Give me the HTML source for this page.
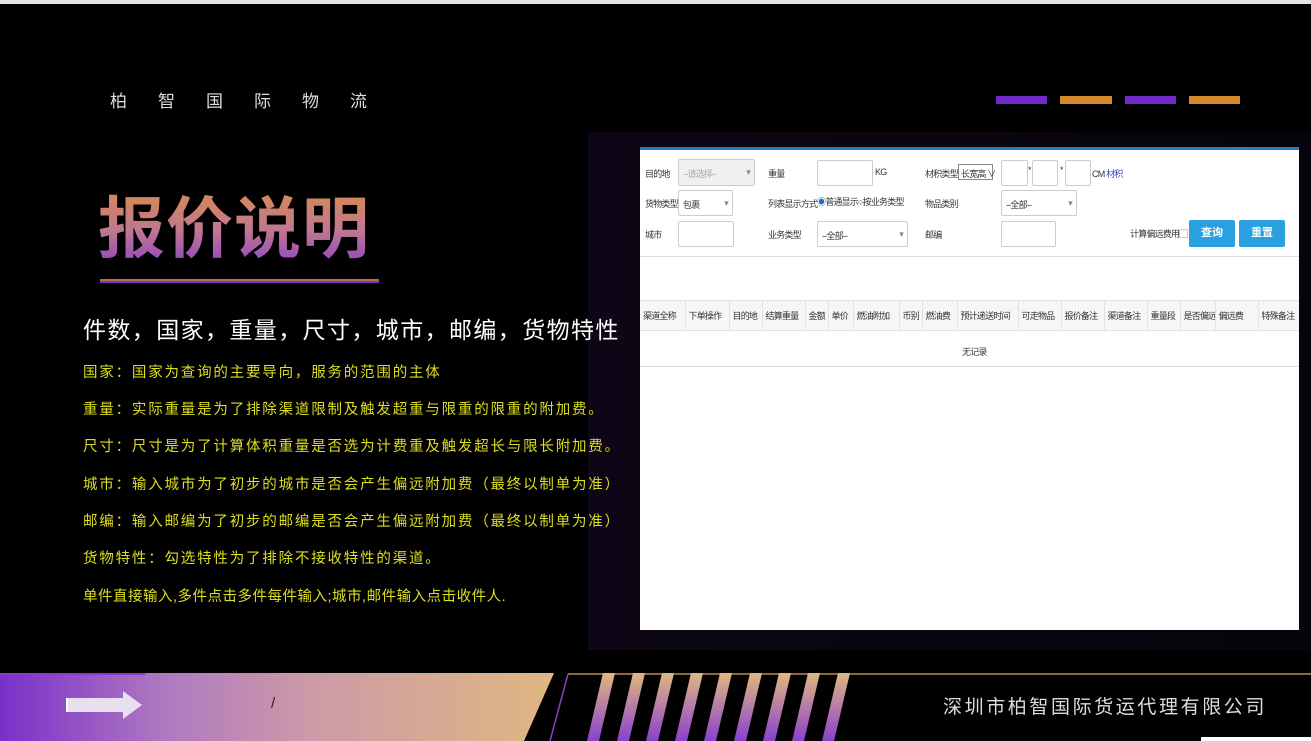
<!DOCTYPE html>
<html><head><meta charset="utf-8"><style>
*{margin:0;padding:0;box-sizing:border-box}
body{width:1311px;height:741px;background:#000;position:relative;overflow:hidden;font-family:"Liberation Sans","Noto Sans CJK SC",sans-serif}
.a{position:absolute}
.f{font-size:9px;color:#333;letter-spacing:-0.8px;white-space:nowrap}
.in{position:absolute;border:1px solid #ccc;background:#fff;border-radius:2px;font-size:9px;color:#333;padding:7px 4px;letter-spacing:-0.8px;white-space:nowrap}
.y{color:#dede22;font-size:14.5px;letter-spacing:1.8px;position:absolute;left:83px;white-space:nowrap;z-index:2}
th{font-weight:normal;font-size:9px;color:#333;letter-spacing:-0.8px;border-right:1px solid #e2e2e2;text-align:left;padding-left:3px;white-space:nowrap;overflow:hidden}
</style></head><body>
<div class="a" style="left:0;top:0;width:1311px;height:4px;background:#e2e4ea"></div>
<div class="a" style="left:110px;top:87px;color:#ddd;font-size:17px;letter-spacing:31px">柏智国际物流</div>
<div class="a" style="left:996px;top:96px;width:51px;height:8px;background:#7128c8"></div>
<div class="a" style="left:1060px;top:96px;width:52px;height:8px;background:#d4892a"></div>
<div class="a" style="left:1125px;top:96px;width:51px;height:8px;background:#7128c8"></div>
<div class="a" style="left:1189px;top:96px;width:51px;height:8px;background:#d4892a"></div>

<div class="a" style="left:98px;top:190px;font-size:67px;font-weight:bold;line-height:80px;letter-spacing:1px;background:linear-gradient(#d88a50,#c07890 50%,#8a40c8);-webkit-background-clip:text;background-clip:text;color:transparent">报价说明</div>
<div class="a" style="left:100px;top:279px;width:279px;height:2px;background:#b0704a"></div>
<div class="a" style="left:100px;top:281px;width:279px;height:2px;background:#7a35c8"></div>

<div class="a" style="left:588px;top:132px;width:723px;height:518px;background:linear-gradient(90deg,#0e0616,#0a0510 50%,#06030a)"></div>
<div class="a" style="left:83px;top:311px;color:#fff;font-size:23px;letter-spacing:1.4px;white-space:nowrap;z-index:2">件数，国家，重量，尺寸，城市，邮编，货物特性</div>
<div class="y" style="top:361px">国家：国家为查询的主要导向，服务的范围的主体</div>
<div class="y" style="top:398px">重量：实际重量是为了排除渠道限制及触发超重与限重的限重的附加费。</div>
<div class="y" style="top:435px">尺寸：尺寸是为了计算体积重量是否选为计费重及触发超长与限长附加费。</div>
<div class="y" style="top:473px">城市：输入城市为了初步的城市是否会产生偏远附加费（最终以制单为准）</div>
<div class="y" style="top:510px">邮编：输入邮编为了初步的邮编是否会产生偏远附加费（最终以制单为准）</div>
<div class="y" style="top:547px">货物特性：勾选特性为了排除不接收特性的渠道。</div>
<div class="y" style="top:585px;letter-spacing:0.5px">单件直接输入,多件点击多件每件输入;城市,邮件输入点击收件人.</div>

<div class="a" style="left:640px;top:147px;width:659px;height:483px;background:#fff;border-top:3px solid #1f7ec4;z-index:3">
 <div class="f a" style="left:5px;top:17px">目的地</div>
 <div class="in" style="left:38px;top:9px;width:77px;height:27px;background:#f0f0f0;color:#aaa">--请选择-- <span style="float:right;color:#888">▾</span></div>
 <div class="f a" style="left:128px;top:17px">重量</div>
 <div class="in" style="left:177px;top:10px;width:56px;height:26px"></div>
 <div class="f a" style="left:235px;top:17px">KG</div>
 <div class="f a" style="left:285px;top:17px">材积类型</div>
 <div class="a f" style="left:318px;top:14px;width:35px;height:16px;border:1px solid #888;padding:2px 0 0 2px">长宽高 ∨</div>
 <div class="in" style="left:361px;top:10px;width:27px;height:26px"></div>
 <div class="f a" style="left:388px;top:15px">*</div>
 <div class="in" style="left:392px;top:10px;width:26px;height:26px"></div>
 <div class="f a" style="left:420px;top:15px">*</div>
 <div class="in" style="left:425px;top:10px;width:26px;height:26px"></div>
 <div class="f a" style="left:452px;top:17px">CM <span style="color:#3344cc">材积</span></div>

 <div class="f a" style="left:5px;top:47px">货物类型</div>
 <div class="in" style="left:38px;top:40px;width:55px;height:26px">包裹 <span style="float:right;color:#888">▾</span></div>
 <div class="f a" style="left:128px;top:47px">列表显示方式</div>
 <div class="f a" style="left:177px;top:45px"><span style="color:#1a6fd0">◉</span>普通显示○按业务类型</div>
 <div class="f a" style="left:285px;top:47px">物品类别</div>
 <div class="in" style="left:361px;top:40px;width:76px;height:26px">--全部-- <span style="float:right;color:#888">▾</span></div>

 <div class="f a" style="left:5px;top:78px">城市</div>
 <div class="in" style="left:38px;top:71px;width:56px;height:26px"></div>
 <div class="f a" style="left:128px;top:78px">业务类型</div>
 <div class="in" style="left:177px;top:71px;width:91px;height:26px">--全部-- <span style="float:right;color:#888">▾</span></div>
 <div class="f a" style="left:285px;top:78px">邮编</div>
 <div class="in" style="left:361px;top:71px;width:55px;height:26px"></div>
 <div class="f a" style="left:490px;top:77px">计算偏远费用▢</div>
 <div class="a" style="left:549px;top:70px;width:46px;height:27px;background:#2aa0e0;border-radius:2px;color:#fff;font-size:11px;text-align:center;line-height:27px;font-weight:bold">查询</div>
 <div class="a" style="left:599px;top:70px;width:46px;height:27px;background:#2aa0e0;border-radius:2px;color:#fff;font-size:11px;text-align:center;line-height:27px;font-weight:bold">重置</div>
 <div class="a" style="left:0;top:106px;width:659px;height:1px;background:#ddd"></div>

 <table class="a" style="left:0;top:150px;width:659px;border-collapse:collapse;background:#f6f6f6;height:31px;border-top:1px solid #e2e2e2;border-bottom:1px solid #e2e2e2;table-layout:fixed">
 <tr><th style="width:45px">渠道全称</th><th style="width:44px">下单操作</th><th style="width:33px">目的地</th><th style="width:43px">结算重量</th><th style="width:23px">金额</th><th style="width:25px">单价</th><th style="width:46px">燃油附加</th><th style="width:23px">币别</th><th style="width:35px">燃油费</th><th style="width:61px">预计递送时间</th><th style="width:43px">可走物品</th><th style="width:43px">报价备注</th><th style="width:43px">渠道备注</th><th style="width:33px">重量段</th><th style="width:35px">是否偏远</th><th style="width:43px">偏远费</th><th style="border:none">特殊备注</th></tr></table>
 <div class="f a" style="left:322px;top:195px">无记录</div>
 <div class="a" style="left:0;top:216px;width:659px;height:1px;background:#ddd"></div>
</div>

<div class="a" style="left:0;top:673px;width:560px;height:68px;background:linear-gradient(90deg,#7a30c8,#b07ac0 30%,#cc9aa8 55%,#e0b880);clip-path:polygon(0 0,554px 0,524px 68px,0 68px)"></div>
<div class="a" style="left:0;top:673px;width:145px;height:2px;background:#8a3ad0"></div>
<svg class="a" style="left:66px;top:691px" width="76" height="28"><polygon points="0,7 57,7 57,0 76,14 57,28 57,21 0,21" fill="#e8e0ee"/><rect x="0" y="7" width="2" height="14" fill="#fff"/></svg>
<div class="a" style="left:271px;top:695px;color:#222;font-size:15px">/</div>
<svg class="a" style="left:520px;top:673px" width="791" height="68">
<defs><linearGradient id="g" x1="0" y1="1" x2="0" y2="0"><stop offset="0" stop-color="#8a40d0"/><stop offset="1" stop-color="#e0b880"/></linearGradient></defs>
<line x1="48" y1="1" x2="791" y2="1" stroke="#c08850" stroke-width="1.5"/>
<line x1="48" y1="1" x2="30" y2="68" stroke="#8a40c8" stroke-width="1.5"/>
<g fill="url(#g)">
<polygon points="83,0 95,0 79,68 67,68"/><polygon points="113,0 125,0 109,68 97,68"/><polygon points="142,0 154,0 138,68 126,68"/><polygon points="171,0 183,0 167,68 155,68"/><polygon points="200,0 212,0 196,68 184,68"/><polygon points="230,0 242,0 226,68 214,68"/><polygon points="259,0 271,0 255,68 243,68"/><polygon points="288,0 300,0 284,68 272,68"/><polygon points="318,0 330,0 314,68 302,68"/></g></svg>
<div class="a" style="left:943px;top:692px;color:#ddd;font-size:19px;letter-spacing:2.6px">深圳市柏智国际货运代理有限公司</div>
<div class="a" style="left:1201px;top:737px;width:110px;height:4px;background:#fff"></div>
</body></html>
